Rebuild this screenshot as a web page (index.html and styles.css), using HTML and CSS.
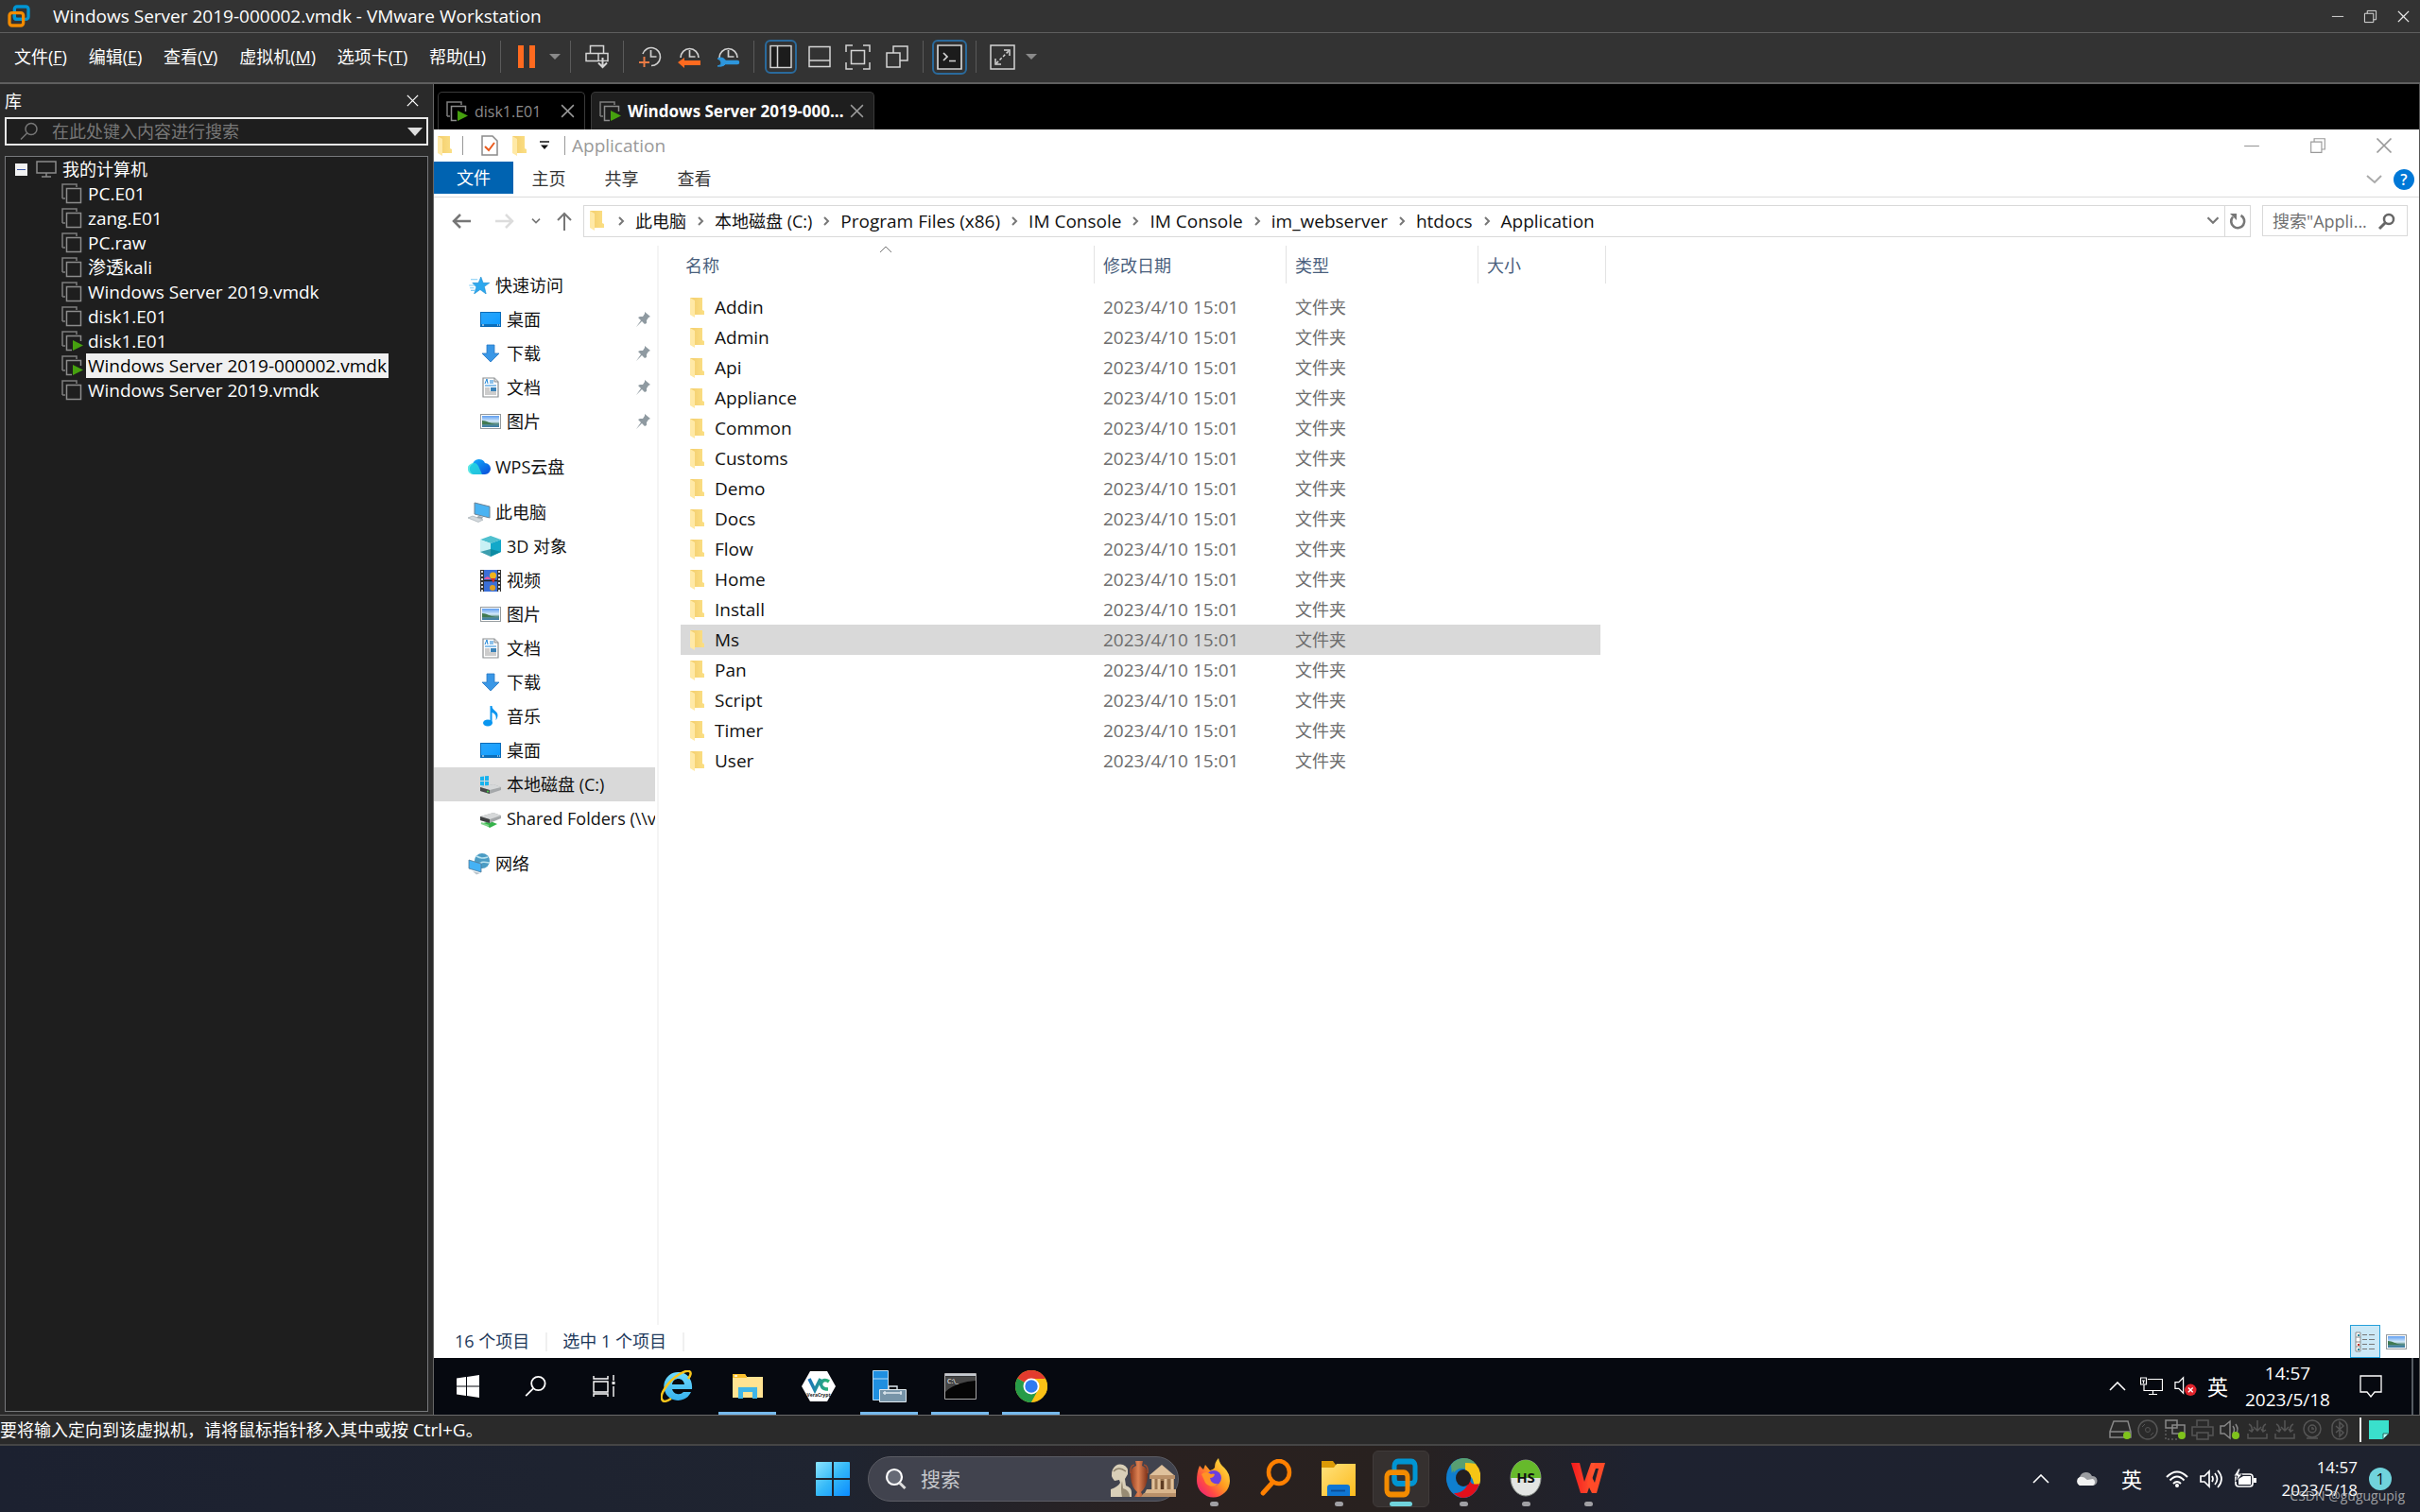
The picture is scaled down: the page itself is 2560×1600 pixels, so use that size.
FILE: index.html
```html
<!DOCTYPE html>
<html lang="zh-CN">
<head>
<meta charset="utf-8">
<title>Windows Server 2019-000002.vmdk - VMware Workstation</title>
<link rel="stylesheet" href="styles.css">
</head>
<body>
<svg class="defs" aria-hidden="true">
  <defs>
    <linearGradient id="gFold" x1="0" x2="1"><stop offset="0" stop-color="#f3cd6c"/><stop offset="1" stop-color="#fbdf85"/></linearGradient>
    <linearGradient id="gDesk" x1="0" x2="1" y1="0" y2="1"><stop offset="0" stop-color="#2ba5f7"/><stop offset=".55" stop-color="#1ba1ff"/><stop offset="1" stop-color="#0a98ff"/></linearGradient>
    <linearGradient id="gSky" x1="0" x2="0" y1="0" y2="1"><stop offset="0" stop-color="#5f9df0"/><stop offset=".5" stop-color="#d7ecfa"/><stop offset=".7" stop-color="#5c8f86"/><stop offset="1" stop-color="#3b7dae"/></linearGradient>
    <linearGradient id="gCloud" x1="0" x2="1" y1="0" y2="1"><stop offset="0" stop-color="#12b6ff"/><stop offset="1" stop-color="#0a49d8"/></linearGradient>
    <linearGradient id="gWin" x1="0" x2="1" y1="0" y2="1"><stop offset="0" stop-color="#8be4ff"/><stop offset=".5" stop-color="#35b9f8"/><stop offset="1" stop-color="#0a8cff"/></linearGradient>
    <linearGradient id="gIe" x1="0" x2="0" y1="0" y2="1"><stop offset="0" stop-color="#6fdcff"/><stop offset="1" stop-color="#35b0ee"/></linearGradient>
    <linearGradient id="gFox" x1="1" x2="0" y1="0" y2="1"><stop offset="0" stop-color="#fff44f"/><stop offset=".45" stop-color="#ff9a1f"/><stop offset=".7" stop-color="#ff4a45"/><stop offset="1" stop-color="#e31587"/></linearGradient>
    <linearGradient id="gFolder" x1="0" x2="1" y1="0" y2="1"><stop offset="0" stop-color="#ffe27d"/><stop offset="1" stop-color="#fcbb1d"/></linearGradient>
    <linearGradient id="gVase" x1="0" x2="1"><stop offset="0" stop-color="#8f3c20"/><stop offset=".45" stop-color="#dd8152"/><stop offset="1" stop-color="#7c3018"/></linearGradient>
    <linearGradient id="gWps" x1="0" x2="1"><stop offset="0" stop-color="#f5191c"/><stop offset="1" stop-color="#ff5f33"/></linearGradient>
    <linearGradient id="gVc" x1="0" x2="1"><stop offset="0" stop-color="#1b75bb"/><stop offset="1" stop-color="#2cb673"/></linearGradient>

    <symbol id="vmware" viewBox="0 0 36 36" preserveAspectRatio="none"><rect x="11" y="3" width="22" height="20" rx="4" fill="none" stroke="#0095d3" stroke-width="5"/><rect x="3" y="13" width="22" height="20" rx="4" fill="none" stroke="#f38b00" stroke-width="5"/><path d="M11 16v4a3 3 0 0 0 3 3h8" fill="none" stroke="#0095d3" stroke-width="5"/></symbol>
    <symbol id="vm" viewBox="0 0 23 22"><path d="M1 16V1h15v3M1 16h3" fill="none" stroke="#7e7e7e" stroke-width="1.5"/><rect x="5.500" y="5.500" width="15" height="15" fill="none" stroke="#8c8c8c" stroke-width="1.500"/></symbol>
    <symbol id="vmon" viewBox="0 0 23 22"><path d="M1 16V1h15v3M1 16h3" fill="none" stroke="#7e7e7e" stroke-width="1.5"/><path d="M11 20.500H5.500v-15h15V11" fill="none" stroke="#8c8c8c" stroke-width="1.500"/><path d="M12 10v11l11-5.500z" fill="#46a10f"/></symbol>
    <symbol id="monitor" viewBox="0 0 22 18"><path d="M1 1h20v12H1zM6 17h10M11 13v4" fill="none" stroke="#8a8a8a" stroke-width="1.500"/></symbol>
    <symbol id="close" viewBox="0 0 16 16"><path d="M2 2l12 12M14 2L2 14" fill="none" stroke="currentColor" stroke-width="1.400"/></symbol>
    <symbol id="restore" viewBox="0 0 16 16"><path d="M1.500 4.500h10v10h-10zM4.500 4.500v-3h10v10h-3" fill="none" stroke="currentColor"/></symbol>
    <symbol id="minus" viewBox="0 0 16 16"><path d="M1 8.500h14" stroke="currentColor"/></symbol>
    <symbol id="mag" viewBox="0 0 20 20"><circle cx="12" cy="7.500" r="6" fill="none" stroke="currentColor" stroke-width="1.500"/><path d="M7.500 12L1 18.500" stroke="currentColor" stroke-width="1.500"/></symbol>
    <symbol id="chev" viewBox="0 0 10 12"><path d="M3 2l4 4-4 4" fill="none" stroke="#777" stroke-width="2"/></symbol>
    <symbol id="down" viewBox="0 0 12 10"><path d="M1 2l5 5 5-5" fill="none" stroke="currentColor" stroke-width="2"/></symbol>
    <symbol id="caret" viewBox="0 0 18 10"><path d="M1 9l8-8 8 8" fill="none" stroke="currentColor" stroke-width="1.600"/></symbol>
    <symbol id="folder" viewBox="0 0 15 21"><path d="M0 0h13v13l2 1v4H4z" fill="url(#gFold)"/><path d="M0 0l5 3v18l-5-3z" fill="#ffe9a6"/></symbol>
    <symbol id="clock" viewBox="0 0 24 24"><path d="M4 9a9.500 9.500 0 1 1 9 12.500" fill="none" stroke="#d0d0d0" stroke-width="1.700"/><path d="M12.500 5v7h6" fill="none" stroke="#d0d0d0" stroke-width="1.700"/></symbol>
    <symbol id="arc" viewBox="0 0 24 24"><path d="M3 13a9.500 9.500 0 1 1 19 0" fill="none" stroke="#d0d0d0" stroke-width="1.700"/><path d="M12.500 5v7h6" fill="none" stroke="#d0d0d0" stroke-width="1.700"/></symbol>

    <symbol id="star" viewBox="0 0 24 20"><path d="M14 0l2.500 7H24l-6 4.500L20 20l-7-5-7 5 2.500-8L4 7h7z" fill="#2da8ee" stroke="#1586cc" stroke-width=".6"/><path d="M2 3h8M0 10h7M1 13h5M2 16h5" stroke="#7ecbf5" stroke-width="1.200"/></symbol>
    <symbol id="desktop" viewBox="0 0 22 16"><rect x=".5" y=".5" width="21" height="15" fill="url(#gDesk)" stroke="#0b6cb9"/><path d="M1 14h20" stroke="#0a5fa5" stroke-width="1.500"/><path d="M2 14h2M18 14h1M20 14h1" stroke="#fff"/></symbol>
    <symbol id="dl" viewBox="0 0 20 20"><path d="M6 1h8v9h5l-9 9-9-9h5z" fill="#3a97e6" stroke="#2a79c4" stroke-width=".8"/></symbol>
    <symbol id="doc" viewBox="0 0 18 22"><path d="M1 1h12l4 4v16H1z" fill="#fff" stroke="#8b8f92" stroke-width="1.200"/><path d="M13 1v4h4" fill="#ddd" stroke="#8b8f92"/><path d="M3 7l2-5 1 5M8 4h4M8 6h4M3 9h12" stroke="#1d86d8" fill="none"/><path d="M3 12h5M3 14h5M3 16h12M3 18h12" stroke="#9a9a9a"/><rect x="9" y="11" width="6" height="4" fill="#3b83b8"/></symbol>
    <symbol id="pic" viewBox="0 0 22 16"><rect x=".5" y=".5" width="21" height="15" fill="#fff" stroke="#949a9e"/><rect x="2" y="2" width="18" height="12" fill="url(#gSky)"/><path d="M2 7c5 0 8 3 14 4H2z" fill="#417a52"/></symbol>
    <symbol id="cloud" viewBox="0 0 24 18"><path d="M6 17a6 6 0 0 1-1-11A7 7 0 0 1 18 5a6 6 0 0 1 0 12z" fill="url(#gCloud)"/><path d="M6 17A6 6 0 1 1 11 8l4 9z" fill="#2be0dc" opacity=".75"/></symbol>
    <symbol id="pc" viewBox="0 0 24 22"><path d="M7 1l16 4v12L7 13z" fill="#4ab3f2" stroke="#6d8293"/><path d="M11 15l5 1-1 2-6-1z" fill="#9aa6ae"/><path d="M0 17l5-2 11 4-5 2.500z" fill="#d3d9dd" stroke="#98a2aa" stroke-width=".6"/></symbol>
    <symbol id="cube" viewBox="0 0 22 22"><path d="M11 0l11 4-11 4L0 4z" fill="#4fc0cf"/><path d="M0 4l11 4v14L0 17z" fill="#c9f1f5"/><path d="M22 4L11 8v14l11-5z" fill="#12a8c9"/><path d="M11 14l11 3-11 5-11-5z" fill="#0c8296" opacity=".75"/></symbol>
    <symbol id="film" viewBox="0 0 22 23"><rect width="22" height="23" fill="#333"/><rect x="4" width="14" height="23" fill="#3a6fd8"/><path d="M2 1v22M20 1v22" stroke="#ddd" stroke-width="2" stroke-dasharray="2 2"/><path d="M4 11.500h14" stroke="#222" stroke-width="1.500"/><circle cx="13.500" cy="6" r="3.500" fill="#f0b41c"/><path d="M11 9h5l-2 5z" fill="#d32f2f"/><path d="M4 10c3-4 5-3 7 0z" fill="#e55aa0"/><circle cx="13" cy="19" r="3" fill="#e0a020"/></symbol>
    <symbol id="music" viewBox="0 0 18 22"><ellipse cx="6" cy="18" rx="5" ry="3.500" fill="#0a96f0"/><path d="M8.500 18V0h2c0 5 6 5 6 10 0 3-2 5-2 5 1-5-1-7-4-8v11z" fill="#0a96f0"/></symbol>
    <symbol id="disk" viewBox="0 0 24 20"><path d="M1 2l4-.5V6H1zM6 1.300L10 1v5H6zM1 7h4v4.500L1 11zM6 7h4v4.500l-4-.3z" fill="#19b3ee"/><path d="M1 13l14-3 8 3v3l-12 4-10-3z" fill="#a5a8aa"/><path d="M1 13l14-3 8 3-12 3z" fill="#d6d8d9"/><path d="M1 13l10 3v4L1 17z" fill="#47494a"/><circle cx="9" cy="17.500" r="1" fill="#4be04b"/></symbol>
    <symbol id="netdisk" viewBox="0 0 24 20"><path d="M4 15l8-2 7 3-8 4z" fill="#35b24a"/><path d="M1 8l14-4 8 3v3l-12 5-10-3z" fill="#a5a8aa"/><path d="M1 8l14-4 8 3-12 4z" fill="#d6d8d9"/><path d="M1 8l10 3v4L1 12z" fill="#3f4142"/><path d="M2 15l8 3" stroke="#7ed389" stroke-width="2"/></symbol>
    <symbol id="net" viewBox="0 0 24 24"><circle cx="15" cy="9" r="8" fill="#4b9cc4"/><path d="M9 4c5 3 8 2 12 1M10 14c4-5 8-4 13-3" stroke="#b9e2ef" fill="none" stroke-width="1.500"/><path d="M1 8l13 4v9L1 17z" fill="#45b2f5" stroke="#547a94" stroke-width=".8"/><path d="M5 20l8 2-4 1.500z" fill="#b9c3ca"/></symbol>
    <symbol id="pin" viewBox="0 0 16 16"><path d="M10 0l6 5-2 1-2 3v3l-2 1-3-3-6 6 5-7-3-3 2-1h3l2-3z" fill="#8f9aa1"/></symbol>

    <symbol id="winLogo" viewBox="0 0 24 24"><path d="M0 3.400L10 2v9.500H0zM11 1.900L24 0v11.500H11zM0 12.500h10V22L0 20.600zM11 12.500h13V24l-13-1.900z" fill="#fff"/></symbol>
    <symbol id="task" viewBox="0 0 24 24"><path d="M1 1v3h15V1M1 7h15v11H1zM1 23v-3h15v3M22 0v6M22 12v11" fill="none" stroke="#fff" stroke-width="1.400"/><path d="M20.500 7h3v3h-3z" fill="#fff"/></symbol>
    <symbol id="ie" viewBox="0 0 34 34"><path d="M19 2a15 15 0 1 0 13 21h-8a7 7 0 0 1-12-3h21c1-10-5-18-14-18zm-7 13c1-8 12-8 13 0z" fill="url(#gIe)"/><path d="M29 9c6-8 1-11-9-5C8 11-3 27 2 32c2 2 6 0 9-2" fill="none" stroke="#f8c51c" stroke-width="2.500"/></symbol>
    <symbol id="exp10" viewBox="0 0 32 28"><path d="M0 1h13l2 3h17v22H0z" fill="#ffe392"/><path d="M0 1h13l2 3v1H0z" fill="#fbc02d"/><path d="M2 3h3" stroke="#fff" stroke-width="1.500"/><path d="M6 27V15h20v12h-5v-7H11v7z" fill="#3fb5e8"/></symbol>
    <symbol id="vera" viewBox="0 0 36 32"><path d="M9 0h18l9 16-9 16H9L0 16z" fill="#fff"/><path d="M8 8l6 12 6-12M29 11c-9-6-13 8-1 8" fill="none" stroke="url(#gVc)" stroke-width="3.600"/><text x="18" y="27" font-size="5" font-weight="700" text-anchor="middle" fill="#222">VeraCrypt</text></symbol>
    <symbol id="server" viewBox="0 0 36 34"><path d="M.5.500h16v31H.5z" fill="#1f8fe0" stroke="#b8dcf5"/><path d="M1 9h15" stroke="#b8dcf5"/><path d="M7.500 20.500h28v13h-28z" fill="#7794a8" stroke="#dfe8ee"/><path d="M17 20v-3h9v3M11 24h20M13 22v4M30 22v4" fill="none" stroke="#dfe8ee" stroke-width="1.400"/></symbol>
    <symbol id="cmd" viewBox="0 0 34 28"><path d="M.5.500h33v27H.5z" fill="#050505" stroke="#a8a8a8"/><path d="M1 2h32" stroke="#c5c9d0" stroke-width="2.500"/><path d="M1 4h32v4C18 9 7 14 1 20z" fill="#5c5c5c" opacity=".75"/><text x="3" y="11" font-size="7" fill="#fff">C:\_</text></symbol>
    <symbol id="chrome" viewBox="0 0 34 34"><circle cx="17" cy="17" r="17" fill="#fbc116"/><path d="M17 17L2.300 8.500A17 17 0 0 1 31.700 8.500z" fill="#e33b2e"/><path d="M2.300 8.500A17 17 0 0 0 17 34l7.400-12.700L17 17z" fill="#269b48"/><path d="M17 9h14.900a17 17 0 0 1 .1 16L17 34l7-13z" fill="#fbc116"/><circle cx="17" cy="17" r="8.500" fill="#fff"/><circle cx="17" cy="17" r="6.700" fill="#2f7af0"/></symbol>
    <symbol id="lan" viewBox="0 0 24 20"><path d="M8 2.500h15.500v12H4V8M13.500 15v3M9 18.500h9M.500 1h6v7h-6zM2 4h3M3.500 4v3" fill="none" stroke="#fff" stroke-width="1.200"/></symbol>
    <symbol id="mute" viewBox="0 0 25 22"><path d="M1 6.500h4l5-5v17l-5-5H1z" fill="none" stroke="#fff" stroke-width="1.300"/><circle cx="18" cy="15" r="6.500" fill="#e0242c"/><path d="M15.500 12.500l5 5M20.500 12.500l-5 5" stroke="#fff" stroke-width="1.400"/></symbol>
    <symbol id="note" viewBox="0 0 24 24"><path d="M1 1h22v17h-7l-4 5-4-5H1z" fill="none" stroke="#fff" stroke-width="1.300"/></symbol>

    <symbol id="win11" viewBox="0 0 36 36"><path d="M0 1a1 1 0 0 1 1-1h16v17H0zM19 0h16a1 1 0 0 1 1 1v16H19zM0 19h17v17H1a1 1 0 0 1-1-1zM19 19h17v16a1 1 0 0 1-1 1H19z" fill="url(#gWin)"/></symbol>
    <symbol id="museum" viewBox="0 0 70 40"><path d="M1 39v-8q8-3 10-7l-1-3-5 1q-5-5-2-12 4-7 11-5 6 2 5 10l-3 5 1 7q6 2 6 7v5z" fill="#d9cfb8"/><path d="M13 22l1 8q7 2 7 9h-8q-2-9 0-17z" fill="#978b73"/><path d="M4 12q5-6 13 0" stroke="#8d816a" fill="none" stroke-width="1.500"/><path d="M27 1h8l-1 5q7 2 6 12-1 11-7 16l3 5H26l3-5q-6-5-7-16-1-10 6-12z" fill="url(#gVase)"/><path d="M26 5q-5 1-4 9M36 5q5 1 4 9" fill="none" stroke="#a24d2e" stroke-width="1.500"/><path d="M42 16L55 5l13 11z" fill="#dfc19c"/><path d="M42 16h27v4H42zM36 35h34v4H33z" fill="#b99069"/><path d="M44 20h24v11H44z" fill="#9b7550"/><path d="M39 31h31v4H37z" fill="#d9b58c"/><path d="M46 20v11M52 20v11M59 20v11M66 20v11" stroke="#e2c29b" stroke-width="3"/><path d="M55.500 22v9" stroke="#5e3c22" stroke-width="3"/></symbol>
    <symbol id="firefox" viewBox="0 0 36 42"><path d="M3 8l4 4 2-5 5 6q4-1 5-3 0-6 4-10 1 6 6 10 6 6 6 14a17 17 0 0 1-35 0q0-9 3-16z" fill="url(#gFox)"/><circle cx="18" cy="21" r="8" fill="#6b3fe0"/><path d="M5 17q5-4 10 0 2-1 4 0-1 4-5 4 1 7 9 6-8 6-14-1-2-5-4-9z" fill="#ff9425"/></symbol>
    <symbol id="every" viewBox="0 0 36 40"><ellipse cx="21" cy="14" rx="11" ry="12" fill="none" stroke="#ff8000" stroke-width="4.500"/><path d="M14 25L4 36" stroke="#ff8000" stroke-width="5" stroke-linecap="round"/></symbol>
    <symbol id="exp11" viewBox="0 0 36 38"><path d="M0 1h12l3 4v6H0z" fill="#dc9a05"/><path d="M0 8h13l3-4h20v34H0z" fill="url(#gFolder)"/><path d="M6 38V29a3 3 0 0 1 3-3h18a3 3 0 0 1 3 3v9z" fill="#0e76d3"/><path d="M10 32.500h15" stroke="#0a4d96" stroke-width="1.800"/></symbol>
    <symbol id="wheel" viewBox="0 0 36 42"><ellipse cx="18" cy="21" rx="18" ry="21" fill="#0f7fd0"/><path d="M5 7C12-2 25-2 31 6L22 12C15 9 9 12 6 19z" fill="#589f72"/><path d="M20 5q6 0 11 1 8 9 4 22l-5 6q0-14-10-21z" fill="#f6c515"/><path d="M35 27q-5 15-18 15-6-1-9-5 13 0 16-14l3 4q4 1 8 0z" fill="#e30f1b"/><path d="M8 37q-6-4-8-15l8-9q-2 13 8 17l6-3q-3 9-14 10z" fill="#0f7fd0"/><ellipse cx="18" cy="21" rx="8" ry="9" fill="#221f22"/></symbol>
    <symbol id="hs" viewBox="0 0 34 40"><ellipse cx="17" cy="20" rx="16" ry="19" fill="#e3e5e3" stroke="#899089"/><path d="M1 20a16 19 0 0 1 32 0z" fill="#66ba2b"/><text x="17" y="25" font-size="15" font-weight="700" text-anchor="middle" fill="#111">HS</text></symbol>
    <symbol id="wps" viewBox="0 0 36 34"><path d="M0 1h9l5 20 7-20h7L17 33h-7z" fill="url(#gWps)"/><path d="M19 10l6 12 4-15h-6l2-6h11l-9 32h-5l-5-10z" fill="#ff4a28"/></symbol>
  </defs>
</svg>

<header class="titlebar">
  <svg width="24" height="24"><use href="#vmware"/></svg>
  <h1>Windows Server 2019-000002.vmdk - VMware Workstation</h1>
  <div class="win-buttons">
    <button aria-label="最小化"><svg width="14" height="14"><use href="#minus"/></svg></button>
    <button aria-label="还原"><svg width="15" height="15"><use href="#restore"/></svg></button>
    <button aria-label="关闭"><svg width="15" height="15"><use href="#close"/></svg></button>
  </div>
</header>

<div class="toolbar">
  <nav class="menu">
    <button>文件(<u>F</u>)</button><button>编辑(<u>E</u>)</button><button>查看(<u>V</u>)</button><button>虚拟机(<u>M</u>)</button><button>选项卡(<u>T</u>)</button><button>帮助(<u>H</u>)</button>
  </nav>
  <i class="sep"></i>
  <button class="tool" aria-label="暂停"><svg width="18" height="24"><path d="M0 0h6v24H0zM12 0h6v24h-6z" fill="#ff6a1f"/></svg></button>
  <button class="drop" aria-label="电源选项"><svg width="12" height="6"><path d="M0 0h12L6 6z" fill="#8a8a8a"/></svg></button>
  <i class="sep"></i>
  <button class="tool" aria-label="发送 Ctrl+Alt+Del"><svg width="25" height="26"><path d="M5.500 1.500h14v8h-14zM1 9.500h23v8H1zM14 9.500v8" fill="none" stroke="#d5d5d5" stroke-width="1.500"/><path d="M14 18h9v8h-9z" fill="#333"/><path d="M18.500 14v10M14 19.500l4.500 4.500 4.500-4.500" fill="none" stroke="#d5d5d5" stroke-width="2"/></svg></button>
  <i class="sep"></i>
  <button class="tool" aria-label="拍摄快照"><svg width="24" height="24"><use href="#clock"/><path d="M0 18h11M5.500 12v11" stroke="#e97b45" stroke-width="2"/></svg></button>
  <button class="tool" aria-label="恢复快照"><svg width="24" height="24"><use href="#arc"/><path d="M0 18l7-5v3h17v5H7v3z" fill="#ff6a1f"/></svg></button>
  <button class="tool" aria-label="管理快照"><svg width="24" height="24"><use href="#arc"/><path d="M7 18h15" stroke="#2d96dc" stroke-width="4.500" stroke-linecap="round"/><path d="M1 14q6-3 9 3 0 6-9 5 5-1 4-4-1-3-4-4z" fill="#2d96dc" stroke="#2d96dc"/></svg></button>
  <i class="sep"></i>
  <button class="tool on" aria-label="显示库"><svg width="24" height="26"><path d="M1 1.500h22v23H1zM8.500 2v22" fill="none" stroke="#d5d5d5" stroke-width="1.500"/></svg></button>
  <button class="tool" aria-label="显示缩略图"><svg width="24" height="24"><path d="M1 1.500h22v21H1zM1 16h22" fill="none" stroke="#d5d5d5" stroke-width="1.500"/></svg></button>
  <button class="tool" aria-label="全屏"><svg width="27" height="27"><path d="M1 8V1h7M19 1h7v7M26 19v7h-7M8 26H1v-7M6.500 6.500h14v14h-14z" fill="none" stroke="#d5d5d5" stroke-width="1.500"/></svg></button>
  <button class="tool" aria-label="Unity"><svg width="24" height="24"><path d="M1 8h14v15H1zM8 8V1h15v15h-8" fill="none" stroke="#d5d5d5" stroke-width="1.500"/></svg></button>
  <i class="sep"></i>
  <button class="tool on" aria-label="控制台视图"><svg width="27" height="27"><path d="M1 1h25v25H1z" fill="none" stroke="#d5d5d5" stroke-width="1.700"/><path d="M7 9l4 4-4 4M13 17.500h7" fill="none" stroke="#d5d5d5" stroke-width="1.700"/></svg></button>
  <i class="sep"></i>
  <button class="tool" aria-label="拉伸客户机"><svg width="27" height="27"><path d="M1 1h25v25H1z" fill="none" stroke="#d5d5d5" stroke-width="1.500"/><path d="M7 20L20 7" stroke="#d5d5d5" stroke-dasharray="3 2" stroke-width="1.500"/><path d="M15 6h6v6M6 15v6h6" fill="none" stroke="#d5d5d5" stroke-width="1.500"/></svg></button>
  <button class="drop" aria-label="拉伸选项"><svg width="12" height="6"><path d="M0 0h12L6 6z" fill="#8a8a8a"/></svg></button>
</div>

<main class="main">
  <aside class="library">
    <div class="lib-head"><label for="libq">库</label><button aria-label="关闭库"><svg width="15" height="15"><use href="#close"/></svg></button></div>
    <div class="lib-search"><svg width="20" height="20"><use href="#mag"/></svg><input id="libq" placeholder="在此处键入内容进行搜索"><svg width="16" height="9"><path d="M0 0h16L8 9z" fill="#ddd"/></svg></div>
    <div class="tree">
      <div class="root"><svg width="13" height="13"><path d="M0 0h13v13H0z" fill="#f1f1f1"/><path d="M2 6.500h9" stroke="#3c58a8"/></svg><svg width="22" height="18"><use href="#monitor"/></svg><span>我的计算机</span></div>
      <ul>
        <li><svg width="23" height="22"><use href="#vm"/></svg><span>PC.E01</span></li>
        <li><svg width="23" height="22"><use href="#vm"/></svg><span>zang.E01</span></li>
        <li><svg width="23" height="22"><use href="#vm"/></svg><span>PC.raw</span></li>
        <li><svg width="23" height="22"><use href="#vm"/></svg><span>渗透kali</span></li>
        <li><svg width="23" height="22"><use href="#vm"/></svg><span>Windows Server 2019.vmdk</span></li>
        <li><svg width="23" height="22"><use href="#vm"/></svg><span>disk1.E01</span></li>
        <li><svg width="23" height="22"><use href="#vmon"/></svg><span>disk1.E01</span></li>
        <li><svg width="23" height="22"><use href="#vmon"/></svg><span class="picked">Windows Server 2019-000002.vmdk</span></li>
        <li><svg width="23" height="22"><use href="#vm"/></svg><span>Windows Server 2019.vmdk</span></li>
      </ul>
    </div>
  </aside>

  <section class="console">
    <div class="tabs">
      <div class="tab"><svg width="23" height="22"><use href="#vmon"/></svg><span>disk1.E01</span><button aria-label="关闭标签"><svg width="17" height="17"><use href="#close"/></svg></button></div>
      <div class="tab active"><svg width="23" height="22"><use href="#vmon"/></svg><span>Windows Server 2019-000...</span><button aria-label="关闭标签"><svg width="17" height="17"><use href="#close"/></svg></button></div>
    </div>

    <div class="explorer">
      <div class="ex-title">
        <svg width="15" height="21"><use href="#folder"/></svg><i class="bar"></i>
        <svg class="check" width="18" height="22"><path d="M1 1h11l5 5v15H1z" fill="#fff" stroke="#8b8b8b" stroke-width="1.500"/><path d="M4 12l4 4 6-8" fill="none" stroke="#ea5a1c" stroke-width="2"/></svg>
        <svg width="15" height="21"><use href="#folder"/></svg>
        <svg class="qat" width="10" height="10"><path d="M0 1h10" stroke="#111" stroke-width="1.500"/><path d="M1 4.500h8L5 9z" fill="#111"/></svg>
        <i class="bar"></i><h2>Application</h2>
        <div class="ex-buttons">
          <button aria-label="最小化"><svg width="18" height="18"><use href="#minus"/></svg></button>
          <button aria-label="还原"><svg width="18" height="18"><use href="#restore"/></svg></button>
          <button aria-label="关闭"><svg width="20" height="20"><use href="#close"/></svg></button>
        </div>
      </div>
      <div class="ribbon">
        <button class="file">文件</button><button>主页</button><button>共享</button><button>查看</button>
        <span class="ribbon-end"><svg width="17" height="11"><path d="M1 2l8 7 7-7" fill="none" stroke="#aaa" stroke-width="2"/></svg><button class="help" aria-label="帮助">?</button></span>
      </div>
      <div class="address-row">
        <button class="nav-btn" aria-label="后退"><svg width="20" height="16"><path d="M9 1L2 8l7 7M2 8h18" fill="none" stroke="#767676" stroke-width="2.500"/></svg></button>
        <button class="nav-btn" aria-label="前进"><svg width="20" height="16"><path d="M11 1l7 7-7 7M18 8H0" fill="none" stroke="#dcdcdc" stroke-width="2.500"/></svg></button>
        <button class="nav-btn small" aria-label="最近"><svg class="grey" width="10" height="8"><use href="#down"/></svg></button>
        <button class="nav-btn up" aria-label="上移"><svg width="16" height="19"><path d="M1 8l7-7 7 7M8 1v18" fill="none" stroke="#767676" stroke-width="2"/></svg></button>
        <div class="address">
          <svg width="15" height="21"><use href="#folder"/></svg>
          <svg class="gt" width="10" height="12"><use href="#chev"/></svg><a href="#">此电脑</a>
          <svg class="gt" width="10" height="12"><use href="#chev"/></svg><a href="#">本地磁盘 (C:)</a>
          <svg class="gt" width="10" height="12"><use href="#chev"/></svg><a href="#">Program Files (x86)</a>
          <svg class="gt" width="10" height="12"><use href="#chev"/></svg><a href="#">IM Console</a>
          <svg class="gt" width="10" height="12"><use href="#chev"/></svg><a href="#">IM Console</a>
          <svg class="gt" width="10" height="12"><use href="#chev"/></svg><a href="#">im_webserver</a>
          <svg class="gt" width="10" height="12"><use href="#chev"/></svg><a href="#">htdocs</a>
          <svg class="gt" width="10" height="12"><use href="#chev"/></svg><a href="#">Application</a>
          <button class="hist" aria-label="历史"><svg width="14" height="11"><use href="#down"/></svg></button>
          <button class="reload" aria-label="刷新"><svg width="18" height="18"><path d="M12.500 3A7 7 0 1 1 4 4.500" fill="none" stroke="#777" stroke-width="2.600"/><path d="M1 1h7v7z" fill="#777"/></svg></button>
        </div>
        <div class="ex-search"><input aria-label="搜索" placeholder="搜索&quot;Appli..."><svg width="18" height="18"><circle cx="11" cy="7" r="5" fill="none" stroke="#666" stroke-width="2.500"/><path d="M8 10l-7 7" stroke="#666" stroke-width="3"/></svg></div>
      </div>
      <div class="ex-body">
        <ul class="places">
          <li><svg width="24" height="18"><use href="#star"/></svg>快速访问</li>
          <li class="sub"><svg width="24" height="16"><use href="#desktop"/></svg>桌面<svg class="pin" width="16" height="16"><use href="#pin"/></svg></li>
          <li class="sub"><svg width="24" height="20"><use href="#dl"/></svg>下载<svg class="pin" width="16" height="16"><use href="#pin"/></svg></li>
          <li class="sub"><svg width="24" height="22"><use href="#doc"/></svg>文档<svg class="pin" width="16" height="16"><use href="#pin"/></svg></li>
          <li class="sub"><svg width="24" height="16"><use href="#pic"/></svg>图片<svg class="pin" width="16" height="16"><use href="#pin"/></svg></li>
          <li class="group"><svg width="24" height="18"><use href="#cloud"/></svg>WPS云盘</li>
          <li class="group"><svg width="24" height="22"><use href="#pc"/></svg>此电脑</li>
          <li class="sub"><svg width="24" height="22"><use href="#cube"/></svg>3D 对象</li>
          <li class="sub"><svg width="24" height="23"><use href="#film"/></svg>视频</li>
          <li class="sub"><svg width="24" height="16"><use href="#pic"/></svg>图片</li>
          <li class="sub"><svg width="24" height="22"><use href="#doc"/></svg>文档</li>
          <li class="sub"><svg width="24" height="20"><use href="#dl"/></svg>下载</li>
          <li class="sub"><svg width="24" height="22"><use href="#music"/></svg>音乐</li>
          <li class="sub"><svg width="24" height="16"><use href="#desktop"/></svg>桌面</li>
          <li class="sub here"><svg width="24" height="20"><use href="#disk"/></svg>本地磁盘 (C:)</li>
          <li class="sub"><svg width="24" height="20"><use href="#netdisk"/></svg>Shared Folders (\\vmware-host)</li>
          <li class="group"><svg width="24" height="24"><use href="#net"/></svg>网络</li>
        </ul>
        <div class="files">
          <table>
            <colgroup><col class="c-name"><col class="c-date"><col class="c-type"><col class="c-size"></colgroup>
            <thead><tr><th>名称<svg class="sort" width="14" height="8"><path d="M1 7l6-6 6 6" fill="none" stroke="#777"/></svg></th><th>修改日期</th><th>类型</th><th>大小</th></tr></thead>
            <tbody>
              <tr><td><svg width="15" height="21"><use href="#folder"/></svg>Addin</td><td>2023/4/10 15:01</td><td>文件夹</td><td></td></tr>
              <tr><td><svg width="15" height="21"><use href="#folder"/></svg>Admin</td><td>2023/4/10 15:01</td><td>文件夹</td><td></td></tr>
              <tr><td><svg width="15" height="21"><use href="#folder"/></svg>Api</td><td>2023/4/10 15:01</td><td>文件夹</td><td></td></tr>
              <tr><td><svg width="15" height="21"><use href="#folder"/></svg>Appliance</td><td>2023/4/10 15:01</td><td>文件夹</td><td></td></tr>
              <tr><td><svg width="15" height="21"><use href="#folder"/></svg>Common</td><td>2023/4/10 15:01</td><td>文件夹</td><td></td></tr>
              <tr><td><svg width="15" height="21"><use href="#folder"/></svg>Customs</td><td>2023/4/10 15:01</td><td>文件夹</td><td></td></tr>
              <tr><td><svg width="15" height="21"><use href="#folder"/></svg>Demo</td><td>2023/4/10 15:01</td><td>文件夹</td><td></td></tr>
              <tr><td><svg width="15" height="21"><use href="#folder"/></svg>Docs</td><td>2023/4/10 15:01</td><td>文件夹</td><td></td></tr>
              <tr><td><svg width="15" height="21"><use href="#folder"/></svg>Flow</td><td>2023/4/10 15:01</td><td>文件夹</td><td></td></tr>
              <tr><td><svg width="15" height="21"><use href="#folder"/></svg>Home</td><td>2023/4/10 15:01</td><td>文件夹</td><td></td></tr>
              <tr><td><svg width="15" height="21"><use href="#folder"/></svg>Install</td><td>2023/4/10 15:01</td><td>文件夹</td><td></td></tr>
              <tr class="selected"><td><svg width="15" height="21"><use href="#folder"/></svg>Ms</td><td>2023/4/10 15:01</td><td>文件夹</td><td></td></tr>
              <tr><td><svg width="15" height="21"><use href="#folder"/></svg>Pan</td><td>2023/4/10 15:01</td><td>文件夹</td><td></td></tr>
              <tr><td><svg width="15" height="21"><use href="#folder"/></svg>Script</td><td>2023/4/10 15:01</td><td>文件夹</td><td></td></tr>
              <tr><td><svg width="15" height="21"><use href="#folder"/></svg>Timer</td><td>2023/4/10 15:01</td><td>文件夹</td><td></td></tr>
              <tr><td><svg width="15" height="21"><use href="#folder"/></svg>User</td><td>2023/4/10 15:01</td><td>文件夹</td><td></td></tr>
            </tbody>
          </table>
        </div>
      </div>
      <div class="ex-status">
        <span>16 个项目</span><span>选中 1 个项目</span>
        <div class="views">
          <button class="on" aria-label="详细信息"><svg width="22" height="22"><path d="M1 1h5v20H1zM1 6h5M1 11h5M1 16h5" fill="#fff" stroke="#8a8a8a"/><path d="M8 3.500h5M15 3.500h6M8 8.500h5M15 8.500h6M8 13.500h5M15 13.500h6M8 18.500h5M15 18.500h6" stroke="#777"/><path d="M3 3h2v2H3zM3 18h2v2H3z" fill="#28889a"/><path d="M3 13h2v2H3z" fill="#c03020"/></svg></button>
          <button aria-label="大图标"><svg width="22" height="16"><use href="#pic"/></svg></button>
        </div>
      </div>
    </div>

    <div class="guest-bar">
      <button aria-label="开始"><svg width="24" height="24"><use href="#winLogo"/></svg></button>
      <button aria-label="搜索"><svg width="24" height="24"><use href="#mag"/></svg></button>
      <button aria-label="任务视图"><svg width="24" height="24"><use href="#task"/></svg></button>
      <button class="app" aria-label="Internet Explorer"><svg width="34" height="34"><use href="#ie"/></svg></button>
      <button class="app run" aria-label="文件资源管理器"><svg width="32" height="28"><use href="#exp10"/></svg></button>
      <button class="app" aria-label="VeraCrypt"><svg width="36" height="32"><use href="#vera"/></svg></button>
      <button class="app run" aria-label="服务器管理器"><svg width="36" height="34"><use href="#server"/></svg></button>
      <button class="app run" aria-label="命令提示符"><svg width="34" height="28"><use href="#cmd"/></svg></button>
      <button class="app run" aria-label="Chrome"><svg width="34" height="34"><use href="#chrome"/></svg></button>
      <div class="guest-tray">
        <svg class="slot" height="10"><use href="#caret"/></svg>
        <svg class="slot" height="20"><use href="#lan"/></svg>
        <svg class="slot" height="22"><use href="#mute"/></svg>
        <span class="ime">英</span>
        <time>14:57<br>2023/5/18</time>
        <svg class="bell" height="24"><use href="#note"/></svg>
        <i class="peek"></i>
      </div>
    </div>
  </section>
</main>

<footer class="vm-status">
  <p>要将输入定向到该虚拟机，请将鼠标指针移入其中或按 <span class="keys">Ctrl+G</span>。</p>
  <div class="devices">
    <svg viewBox="0 0 24 24"><path d="M5 3h15l3 11v6H1v-6zM1 14h22" fill="none" stroke="#888" stroke-width="1.500"/><circle cx="19" cy="18" r="4" fill="#7fc31c"/></svg>
    <svg viewBox="0 0 24 24"><circle cx="12" cy="12" r="10" fill="none" stroke="#555" stroke-width="1.500"/><circle cx="12" cy="12" r="2.500" fill="none" stroke="#555"/><path d="M6 9l3-3M15 18l3-3" stroke="#555"/></svg>
    <svg viewBox="0 0 24 24"><path d="M2 2h12v8H2zM9 7h13v9H9z" fill="#2a2a2a" stroke="#888" stroke-width="1.500"/><path d="M2 12v10h12" fill="none" stroke="#777" stroke-dasharray="2 2"/><circle cx="19" cy="18" r="4" fill="#7fc31c"/></svg>
    <svg viewBox="0 0 24 24"><path d="M6 8V2h12v6M6 18H1V9h22v9h-5M6 15h12v7H6z" fill="none" stroke="#555" stroke-width="1.500"/></svg>
    <svg viewBox="0 0 24 24"><path d="M2 8h4l6-5v18l-6-5H2z" fill="none" stroke="#888" stroke-width="1.500"/><path d="M15 8q3 4 0 8M18 6q4 6 0 10" fill="none" stroke="#888" stroke-width="1.500"/><circle cx="18" cy="18" r="4" fill="#7fc31c"/></svg>
    <svg viewBox="0 0 24 24"><path d="M2 16v5h20v-5M12 2v10M8 9l4 4 4-4M3 6q4 2 3 7M21 6q-4 2-3 7M3 12l3 2 2-3M16 11l2 3 3-2" fill="none" stroke="#555" stroke-width="1.500"/></svg>
    <svg viewBox="0 0 24 24"><path d="M2 16v5h20v-5M12 2v10M8 9l4 4 4-4M3 6q4 2 3 7M21 6q-4 2-3 7M3 12l3 2 2-3M16 11l2 3 3-2" fill="none" stroke="#555" stroke-width="1.500"/></svg>
    <svg viewBox="0 0 24 24"><circle cx="12" cy="11" r="9" fill="none" stroke="#555" stroke-width="1.500"/><circle cx="12" cy="11" r="4" fill="none" stroke="#555" stroke-width="1.500"/><path d="M12 9v2h2M6 21h12" stroke="#555" fill="none" stroke-width="1.500"/></svg>
    <svg viewBox="0 0 24 24"><rect x="4" y="1" width="16" height="21" rx="8" fill="none" stroke="#555" stroke-width="1.500"/><path d="M8 8l8 7-4 4V4l4 4-8 7" fill="none" stroke="#555" stroke-width="1.500"/></svg>
    <i class="mark"></i>
    <svg viewBox="0 0 24 24"><path d="M1 2h21v14l-6 6H1z" fill="#3ae0cc"/><path d="M16 22v-6h6z" fill="#b6fff5" stroke="#27655f"/></svg>
  </div>
</footer>

<div class="host-bar">
  <div class="dock">
    <button class="start" aria-label="开始"><svg width="36" height="36"><use href="#win11"/></svg></button>
    <div class="pill"><svg width="23" height="24"><circle cx="10" cy="10" r="8" fill="#666a75" stroke="#fff" stroke-width="2.200"/><path d="M15.500 16l6 6" stroke="#ddd" stroke-width="3"/></svg><input aria-label="搜索" placeholder="搜索"><svg width="70" height="40"><use href="#museum"/></svg></div>
    <button class="item run" aria-label="Firefox"><svg width="36" height="42"><use href="#firefox"/></svg></button>
    <button class="item" aria-label="Everything"><svg width="36" height="40"><use href="#every"/></svg></button>
    <button class="item run" aria-label="文件资源管理器"><svg width="36" height="38"><use href="#exp11"/></svg></button>
    <button class="item current" aria-label="VMware Workstation"><svg width="36" height="42"><use href="#vmware"/></svg></button>
    <button class="item run" aria-label="浏览器"><svg width="36" height="42"><use href="#wheel"/></svg></button>
    <button class="item run" aria-label="HS"><svg width="34" height="40"><use href="#hs"/></svg></button>
    <button class="item run" aria-label="WPS"><svg width="36" height="34"><use href="#wps"/></svg></button>
  </div>
  <div class="host-tray">
    <svg class="wide" height="10"><use href="#caret"/></svg>
    <svg class="wide" viewBox="0 0 24 16" height="16"><path d="M5 15a5 5 0 0 1 0-9 7 7 0 0 1 13-1 5 5 0 0 1 1 10z" fill="#9b9da1"/><path d="M5 15a5 5 0 0 1 0-9q4-1 8 3l6-1a4 4 0 0 1 0 7z" fill="#f2f2f2"/></svg>
    <span class="ime">英</span>
    <svg class="slot" viewBox="0 0 24 18" height="18"><path d="M1 7q11-11 22 0M4.500 10.500q7.500-8 15 0M8 14q4-4 8 0" fill="none" stroke="#fff" stroke-width="2"/><circle cx="12" cy="16" r="2" fill="#fff"/></svg>
    <svg class="slot" viewBox="0 0 24 20" height="20"><path d="M1 7h4l5-5v16l-5-5H1zM13 7q2 3 0 6M16 4q5 6 0 12M19 1q8 9 0 18" fill="none" stroke="#fff" stroke-width="1.700"/></svg>
    <svg class="slot" viewBox="0 0 24 20" height="20"><rect x="2" y="5" width="18" height="13" rx="3" fill="none" stroke="#fff" stroke-width="1.700"/><path d="M5 10l5-3h8v9H5zM21 9h3v5h-3z" fill="#fff"/><path d="M5-1L0 7h4l-2 6 7-8H5l2-6z" fill="#fff" stroke="#1e222e" stroke-width=".8"/></svg>
    <time>14:57<br>2023/5/18</time>
    <span class="badge">1</span>
  </div>
  <span class="watermark">CSDN @gugugupig</span>
</div>
</body>
</html>
```
FILE: styles.css
```css
* { box-sizing: border-box; }
html, body { margin: 0; height: 100%; }
body {
  display: flex;
  flex-direction: column;
  min-height: 100vh;
  overflow: hidden;
  background: #2a2a2a;
  color: #fff;
  font: 18px/26px "Open Sans", "Noto Sans CJK SC", sans-serif;
}
svg { flex: none; display: block; overflow: visible; }
.defs { position: absolute; width: 0; height: 0; }
button, input { font: inherit; color: inherit; border: 0; padding: 0; margin: 0; background: none; outline: 0; }
button { display: flex; align-items: center; justify-content: center; }
h1, h2, p, ul { margin: 0; padding: 0; font-weight: 400; }
ul { list-style: none; }
a { color: inherit; text-decoration: none; }

/* Host window frame */
.titlebar { display: flex; align-items: center; height: 35px; padding: 0 0 0 8px; background: #333; border-bottom: 1px solid #5e5e5e; }
.titlebar h1 { margin-left: 24px; font-size: 19px; }
.win-buttons { display: flex; margin-left: auto; color: #e6e6e6; }
.win-buttons button { width: 35px; height: 34px; }

.toolbar { display: flex; align-items: center; height: 54px; padding-bottom: 2px; background: #333; border-bottom: 2px solid #5f5f5f; }
.menu { display: flex; justify-content: space-between; width: 529px; padding: 0 15px; }
.menu button { display: block; }
.sep { flex: none; width: 1px; height: 34px; margin: 0 7px; background: #5a5a5a; }
.menu + .sep { margin: 0 6px 0 0; }
.tool { width: 41px; height: 41px; }
.tool.on svg { outline: 2px solid #2a6a9c; outline-offset: 3px; background: #1c1c1c; border-radius: 1px; }
.drop { width: 19px; height: 41px; }

.main { flex: 1; display: flex; min-height: 0; border-bottom: 1px solid #6a6a6a; }
.library { display: flex; flex-direction: column; width: 459px; padding: 0 5px 3px 5px; border-right: 1px solid #666; background: #2a2a2a; }
.lib-head { display: flex; align-items: center; justify-content: space-between; height: 35px; padding-right: 9px; }
.lib-search { display: flex; align-items: center; height: 30px; padding: 0 4px 0 14px; border: 2px solid #e8e8e8; background: #1e1e1e; color: #777; }
.lib-search input { flex: 1; min-width: 0; margin-left: 14px; }
.lib-search input::placeholder { color: #777; opacity: 1; }
.tree { flex: 1; margin-top: 11px; border: 1px solid #77797c; background: #1e1e1e; }
.root, .tree li { display: flex; align-items: center; height: 26px; }
.root { padding-left: 10px; gap: 9px; }
.root span { margin-left: -3px; }
.tree li { padding-left: 59px; gap: 3px; }
.tree li span { padding: 0 2px; font-size: 19px; }
.tree .picked { background: #f0f0f0; color: #000; }

.console { flex: 1; min-width: 0; display: flex; flex-direction: column; border-right: 1px solid #555; }
.tabs { display: flex; align-items: flex-end; gap: 6px; height: 48px; padding-left: 4px; background: #000; }
.tab { display: flex; align-items: center; width: 156px; height: 40px; padding: 0 9px 0 8px; border: 1px solid #3a3a3a; border-bottom: 0; border-radius: 5px 5px 0 0; color: #8a8a8a; }
.tab span { margin-left: 7px; font-size: 16px; }
.tab button { margin-left: auto; color: #9a9a9a; }
.tab.active { width: 300px; background: #1e1e1e; }
.tab.active span { color: #fff; font-size: 17px; font-weight: 700; white-space: nowrap; }

/* Explorer window in the guest */
.explorer { flex: 1; min-height: 0; display: flex; flex-direction: column; background: #fff; color: #111; }
.ex-title { display: flex; align-items: center; height: 34px; padding-left: 4px; }
.ex-title h2 { margin-left: 7px; color: #999; font-size: 19px; }
.bar { width: 1px; height: 20px; margin: 0 19px 0 11px; background: #999; }
.check { margin-right: 15px; }
.qat { margin: 0 5px 0 14px; }
.qat + .bar { margin-left: 11px; margin-right: 0; }
.ex-buttons { display: flex; margin-left: auto; padding-right: 2px; color: #999; }
.ex-buttons button { width: 70px; height: 34px; }
.ribbon { display: flex; height: 38px; border-bottom: 1px solid #dcdcdc; color: #333; }
.ribbon > button { width: 77px; height: 36px; }
.ribbon .file { width: 84px; height: 34px; margin-right: -1px; background: #0063b1; color: #fff; }
.ribbon-end { display: flex; align-items: center; gap: 12px; margin-left: auto; padding-right: 5px; }
.help { width: 22px; height: 22px; border-radius: 50%; background: #0078d7; color: #fff; font-weight: 600; font-size: 16px; }
.address-row { display: flex; height: 42px; padding: 8px 12px 0 6px; }
.nav-btn { width: 46px; }
.nav-btn.small { width: 20px; }
.nav-btn.up { width: 40px; }
.grey { color: #777; }
.address { flex: 1; display: flex; align-items: center; min-width: 0; padding: 0 0 1px 6px; border: 1px solid #d9d9d9; font-size: 19px; white-space: nowrap; }
.gt { margin: 0 10px; }
.address > svg:first-child { margin-right: 3px; }
.address a:nth-of-type(-n+2) { font-size: 18px; }
.hist { margin-left: auto; width: 24px; color: #777; }
.reload { width: 27px; height: 32px; border-left: 1px solid #d9d9d9; }
.ex-search { display: flex; align-items: center; width: 154px; height: 33px; margin-left: 12px; padding: 0 12px 0 10px; border: 1px solid #d9d9d9; color: #777; }
.ex-search input { flex: 1; min-width: 0; }
.ex-search input::placeholder { color: #707070; opacity: 1; }

.ex-body { flex: 1; display: flex; min-height: 0; margin-top: 9px; }
.places { width: 238px; padding: 24px 2px 0 0; border-right: 2px solid #f4f4f4; }
.places li { display: flex; align-items: center; gap: 5px; height: 36px; padding-left: 36px; overflow: hidden; white-space: nowrap; }
.places .sub { padding-left: 48px; }
.places .group { margin-top: 12px; }
.places .here { background: #d9d9d9; }
.places .pin { margin-left: auto; margin-right: 5px; }
.files { padding-left: 23px; }
table { table-layout: fixed; width: 979px; border-spacing: 0; }
.c-name { width: 438px; }
.c-date, .c-type { width: 203px; }
th { position: relative; height: 49px; padding: 0 0 8px 9px; text-align: left; font-weight: 400; color: #4a5f7d; background: linear-gradient(#e3e3e3, #e3e3e3) right top / 1px 40px no-repeat; }
th:first-child { padding-left: 5px; }
.sort { position: absolute; top: 0; left: 210px; }
td { height: 32px; padding: 0 0 0 9px; color: #6d6d6d; }
td:first-child { display: flex; align-items: center; gap: 11px; padding-left: 10px; color: #111; font-size: 19px; }
td:nth-child(2) { font-size: 19px; }
td:last-child { border-right: 6px solid #fff; }
.selected td { background: #d9d9d9; }

.ex-status { display: flex; align-items: center; height: 35px; padding-left: 6px; color: #1e395b; }
.ex-status > span { padding: 0 17px 2px 16px; border-right: 2px solid #f0f0f0; line-height: 18px; }
.views { display: flex; margin-left: auto; padding-right: 7px; }
.views button { width: 34px; height: 35px; }
.views .on { width: 32px; border: 1px solid #26a0da; background: #cbe8f6; }

/* Guest taskbar */
.guest-bar { display: flex; height: 60px; background: #060910; }
.guest-bar > button { width: 72px; }
.guest-bar > .app { width: 61px; margin-left: 14px; border-bottom: 3px solid transparent; border-top: 3px solid transparent; }
.guest-bar > .app:nth-child(4) { margin-left: 10px; }
.guest-bar > .run { border-bottom-color: #76b9ed; }
.guest-tray, .host-tray { display: flex; align-items: center; margin-left: auto; }
.slot { width: 36px; padding: 0 6px; }
.ime { font-size: 22px; text-align: center; }
.guest-tray .ime { width: 32px; }
.guest-tray time { width: 116px; font-size: 19px; line-height: 28px; text-align: center; }
.bell { width: 60px; padding: 0 18px; }
.peek { width: 2px; height: 60px; margin: 0 6px 0 13px; background: #555b62; }

.vm-status { display: flex; align-items: center; height: 32px; border-bottom: 2px solid #454545; background: #2a2a2a; }
.keys { font-size: 19px; }
.devices { display: flex; align-items: center; gap: 5px; margin-left: auto; padding-right: 31px; }
.devices svg { width: 24px; height: 24px; }
.mark { width: 2px; height: 26px; margin: 0 2px 0 4px; background: #eee; }

/* Host taskbar */
.host-bar { position: relative; display: grid; grid-template-columns: 1fr auto 1fr; height: 70px; background: linear-gradient(90deg, #1c2130, #1f2430 35%, #2a2120 48%, #28211f 57%, #1e2230 68%, #1e222e); }
.dock { grid-column: 2; display: flex; align-items: center; }
.start { width: 68px; height: 60px; }
.pill { display: flex; align-items: center; width: 329px; height: 48px; margin: 0 4px 0 3px; padding: 0 2px 0 17px; border: 1px solid #5b5c64; border-radius: 24px; background: #41434e; font-size: 21px; }
.pill input { flex: 1; min-width: 0; margin-left: 15px; }
.pill input::placeholder { color: #c8c9cd; opacity: 1; }
.item { position: relative; width: 60px; height: 60px; margin: 0 3px; padding-bottom: 2px; border: 1px solid transparent; border-radius: 6px; }
.item.current { background: #35302f; border-color: #403b3a; }
.item.run::after, .item.current::after { content: ""; position: absolute; bottom: 0; width: 9px; height: 5px; border-radius: 3px; background: #a0a0a4; }
.item.current::after { width: 24px; background: #70d3dc; }
.host-tray { grid-column: 3; padding-right: 30px; }
.host-tray .wide { width: 48px; padding: 0 12px; }
.host-tray .wide:first-child { padding: 0 15px; }
.host-tray .ime { width: 48px; margin-right: 6px; }
.host-tray time { width: 101px; font-size: 17px; line-height: 24px; text-align: right; }
.badge { width: 24px; height: 24px; margin-left: 12px; border-radius: 50%; background: #70d3dc; color: #111; font-size: 16px; line-height: 24px; text-align: center; }
.watermark { position: absolute; right: 16px; bottom: 4px; font-size: 14px; color: #c9c9c9; opacity: .75; }
```
